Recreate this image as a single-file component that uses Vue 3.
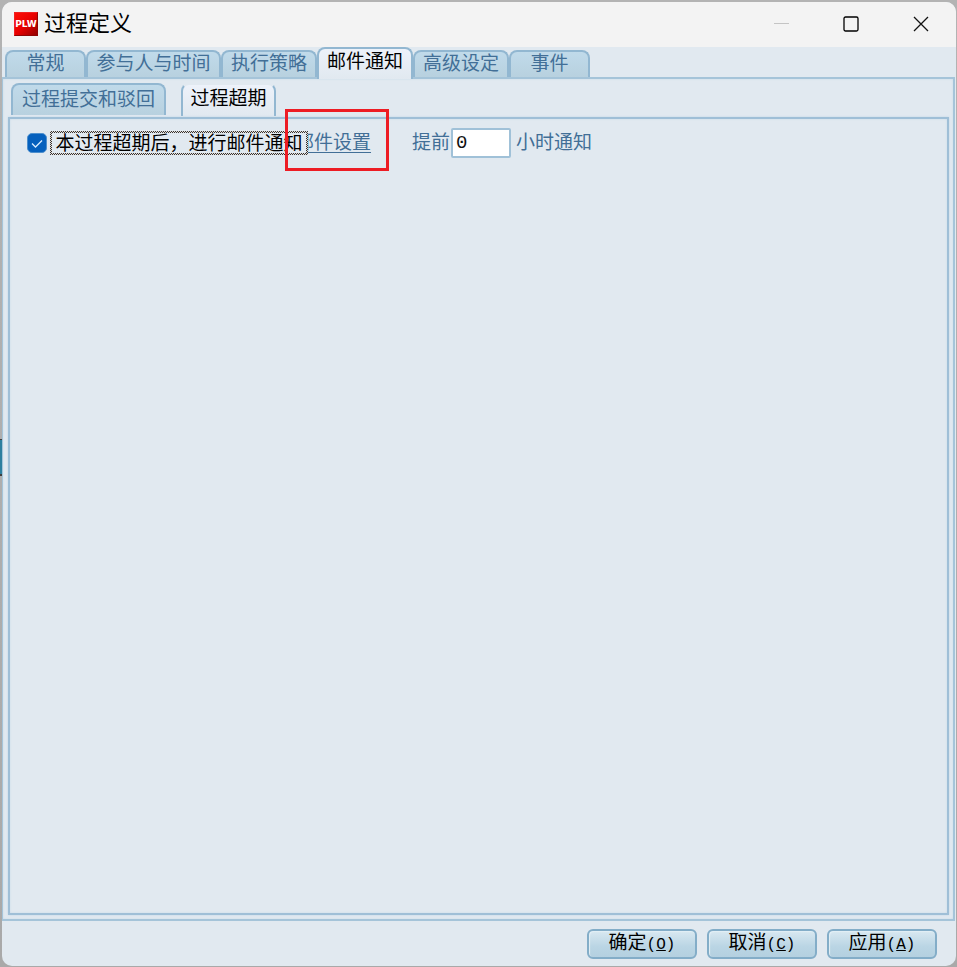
<script setup>
import { ref } from 'vue'

const tabs = [
  { name: '常规', size: 'narrow' },
  { name: '参与人与时间', size: 'wide' },
  { name: '执行策略', size: 'normal' },
  { name: '邮件通知', size: 'normal' },
  { name: '高级设定', size: 'normal' },
  { name: '事件', size: 'narrow' },
]
const activeTab = ref('邮件通知')
const subTabs = ['过程提交和驳回', '过程超期']
const activeSubTab = ref('过程超期')
const notify = ref(true)
const hours = ref('0')
const actions = [
  { name: '确定', key: 'O' },
  { name: '取消', key: 'C' },
  { name: '应用', key: 'A' },
]
</script>

<template>
  <div class="desktop">
    <section class="window">
      <header class="titlebar">
        <svg class="logo" viewBox="0 0 24 24" aria-hidden="true">
          <defs>
            <linearGradient id="logo-red" x1="0" y1="0" x2="1" y2="1">
              <stop offset="0" stop-color="#ff1008" />
              <stop offset="0.5" stop-color="#e80000" />
              <stop offset="1" stop-color="#8c0000" />
            </linearGradient>
          </defs>
          <rect width="24" height="24" fill="url(#logo-red)" />
          <path d="M0.500 23.500V0.500H23.500" fill="none" stroke="#f02020" />
          <path d="M23.500 0.500V23.500H0.500" fill="none" stroke="#8e0505" />
          <text x="12" y="15" text-anchor="middle" class="logo-text">PLW</text>
        </svg>
        <h1 class="title">过程定义</h1>
        <div class="controls">
          <button class="control" type="button" aria-label="最小化" disabled>
            <svg viewBox="0 0 16 16"><path d="M1 7.500H16" stroke="#c4c4c4" /></svg>
          </button>
          <button class="control" type="button" aria-label="最大化">
            <svg viewBox="0 0 16 16">
              <rect x="1" y="1" width="14" height="14" rx="1.500" fill="none" stroke="#000" stroke-width="1.300" />
            </svg>
          </button>
          <button class="control" type="button" aria-label="关闭">
            <svg viewBox="0 0 16 16"><path d="M1 1L15 15M15 1L1 15" stroke="#111" stroke-width="1.300" /></svg>
          </button>
        </div>
      </header>

      <nav class="tabs" role="tablist">
        <button
          v-for="tab in tabs"
          :key="tab.name"
          type="button"
          role="tab"
          class="tab"
          :class="[tab.size, { active: tab.name === activeTab }]"
          :aria-selected="tab.name === activeTab"
          @click="activeTab = tab.name"
        >{{ tab.name }}</button>
      </nav>

      <main class="panel">
        <nav class="subtabs" role="tablist">
          <button
            v-for="name in subTabs"
            :key="name"
            type="button"
            role="tab"
            class="subtab"
            :class="{ current: name === activeSubTab }"
            :aria-selected="name === activeSubTab"
            @click="activeSubTab = name"
          >{{ name }}</button>
        </nav>
        <div class="page">
          <div class="row">
            <span class="check">
              <input id="notify" v-model="notify" type="checkbox" />
              <svg class="tick" viewBox="0 0 20 20" aria-hidden="true">
                <path d="M5 10.500L8.500 14L15 7.500" fill="none" stroke="#d8ecff" stroke-width="1.300" />
              </svg>
            </span>
            <label class="notify-label" for="notify">本过程超期后，进行邮件通知</label>
            <span class="link-wrap">
              <a class="link" href="#">邮件设置</a>
              <span class="highlight"></span>
            </span>
            <label class="before" for="hours">提前</label>
            <input id="hours" v-model="hours" class="hours" type="text" />
            <label class="after" for="hours">小时通知</label>
          </div>
        </div>
      </main>

      <footer class="actions">
        <button v-for="a in actions" :key="a.key" type="button" class="action">
          {{ a.name }}<span class="key">(<u>{{ a.key }}</u>)</span>
        </button>
      </footer>
    </section>
  </div>
</template>

<style>
body {
  margin: 0;
}
</style>

<style scoped>
* {
  box-sizing: border-box;
}
.desktop {
  min-height: 100vh;
  display: flex;
  padding: 2px 1px 1px 2px;
  background: linear-gradient(#2d7f9f, #2d7f9f) 0 440px / 2px 34px no-repeat,
    linear-gradient(#3f3f3f, #3f3f3f) 0 439px / 2px 37px no-repeat,
    linear-gradient(#b3b3b3, #a9a9a9);
  font-family: "Liberation Sans", "Noto Sans CJK SC", sans-serif;
  font-size: 19px;
  line-height: 22px;
  color: #426f97;
}
.window {
  flex: 1;
  min-width: 0;
  display: flex;
  flex-direction: column;
  background: #e1e9f0;
  border-radius: 10px;
  overflow: hidden;
}
button,
input {
  font: inherit;
  color: inherit;
  margin: 0;
}
button {
  padding: 0;
  white-space: nowrap;
}
.titlebar {
  display: flex;
  align-items: center;
  height: 45px;
  flex: none;
  padding: 0 0 2px 12px;
  background: #f3f3f3;
  color: #000;
}
.logo {
  width: 24px;
  height: 24px;
}
.logo-text {
  font: bold 9px "DejaVu Sans", sans-serif;
  fill: #fff;
}
.title {
  margin: 0 0 0 6px;
  font-size: 22px;
  line-height: 30px;
  font-weight: 400;
}
.controls {
  display: flex;
  margin-left: auto;
}
.control {
  width: 70px;
  height: 40px;
  display: flex;
  align-items: center;
  justify-content: center;
  border: 0;
  background: none;
}
.control svg {
  width: 16px;
  height: 16px;
}
.tabs {
  display: flex;
  align-items: flex-end;
  height: 30px;
  padding-left: 3px;
  flex: none;
}
.tab,
.subtab {
  border: 2px solid #92b7d1;
  border-bottom: 0;
  border-radius: 8px 8px 0 0;
  background: linear-gradient(#c0daea, #b8d1df);
  color: #426f97;
}
.tab {
  height: 27px;
  padding-bottom: 1px;
  width: 96px;
}
.tab.narrow {
  width: 81px;
}
.tab.wide {
  width: 135px;
}
.tab.active {
  position: relative;
  z-index: 1;
  height: 32px;
  margin-bottom: -2px;
  padding-bottom: 4px;
  background: linear-gradient(#edf2fa, #e1e9f0);
  color: #000;
}
.panel {
  flex: 1;
  display: flex;
  flex-direction: column;
  margin-right: 1px;
  padding: 4px 4px 4px 5px;
  border: 2px solid #a5c4d9;
  border-left-width: 1px;
  box-shadow: inset 0 0 2px #c1d7e7;
}
.subtabs {
  display: flex;
  gap: 15px;
  height: 34px;
  padding-left: 3px;
  flex: none;
}
.subtab {
  width: 155px;
  height: 32px;
}
.subtab.current {
  width: 95px;
  height: 33px;
  padding-bottom: 4px;
  border-top-color: #e1e9f0;
  background: linear-gradient(#edf2fa, #e1e9f0);
  color: #000;
}
.page {
  flex: 1;
  border: 2px solid #9fbfd7;
  box-shadow: 0 0 2px #c1d7e7, inset 0 0 2px #c1d7e7;
}
.row {
  display: flex;
  align-items: center;
  padding: 9px 0 0 17px;
  line-height: 24px;
}
.check {
  display: grid;
  flex: none;
}
.check input,
.tick {
  grid-area: 1 / 1;
  width: 20px;
  height: 20px;
}
.check input {
  appearance: none;
  border-radius: 5px;
  border: 1px solid #4d8fcd;
  background: #fff;
}
.check input:checked {
  background: #0560bd;
}
.tick {
  pointer-events: none;
}
.notify-label {
  position: relative;
  z-index: 1;
  flex: none;
  width: 258px;
  height: 24px;
  margin-left: 3px;
  border: 2px solid transparent;
  background: linear-gradient(#e1e9f0, #e1e9f0) padding-box,
    repeating-conic-gradient(#333 0 25%, #e6e0dc 0 50%) 0 0 / 2px 2px border-box;
  line-height: 22px;
  text-align: center;
  white-space: nowrap;
  color: #000;
}
.link-wrap {
  position: relative;
  flex: none;
  margin-left: -13px;
}
.link {
  color: #426f97;
  text-decoration: underline;
  text-underline-offset: 3px;
}
.highlight {
  position: absolute;
  z-index: 2;
  inset: -22px -18px -16px -10px;
  border: 3px solid #ed1c24;
  pointer-events: none;
}
.before {
  flex: none;
  margin-left: 41px;
}
.hours {
  width: 60px;
  height: 30px;
  margin: 0 5px 0 1px;
  padding: 0 3px;
  border: 2px solid #a0c1d8;
  border-radius: 2px;
  background: #fff;
  color: #111;
  font-family: "Liberation Mono", monospace;
}
.after {
  flex: none;
}
.actions {
  display: flex;
  justify-content: flex-end;
  gap: 10px;
  padding: 8px 19px 7px 0;
  flex: none;
}
.action {
  width: 110px;
  height: 30px;
  border: 2px solid #83adc8;
  border-radius: 6px;
  background: linear-gradient(#d8e8f1, #bad5e4 60%, #b4d0e0);
  box-shadow: inset 1px 1px 1px #e3eff6;
  color: #000;
}
.key {
  font-family: "Liberation Mono", monospace;
  font-size: 16px;
}
</style>
